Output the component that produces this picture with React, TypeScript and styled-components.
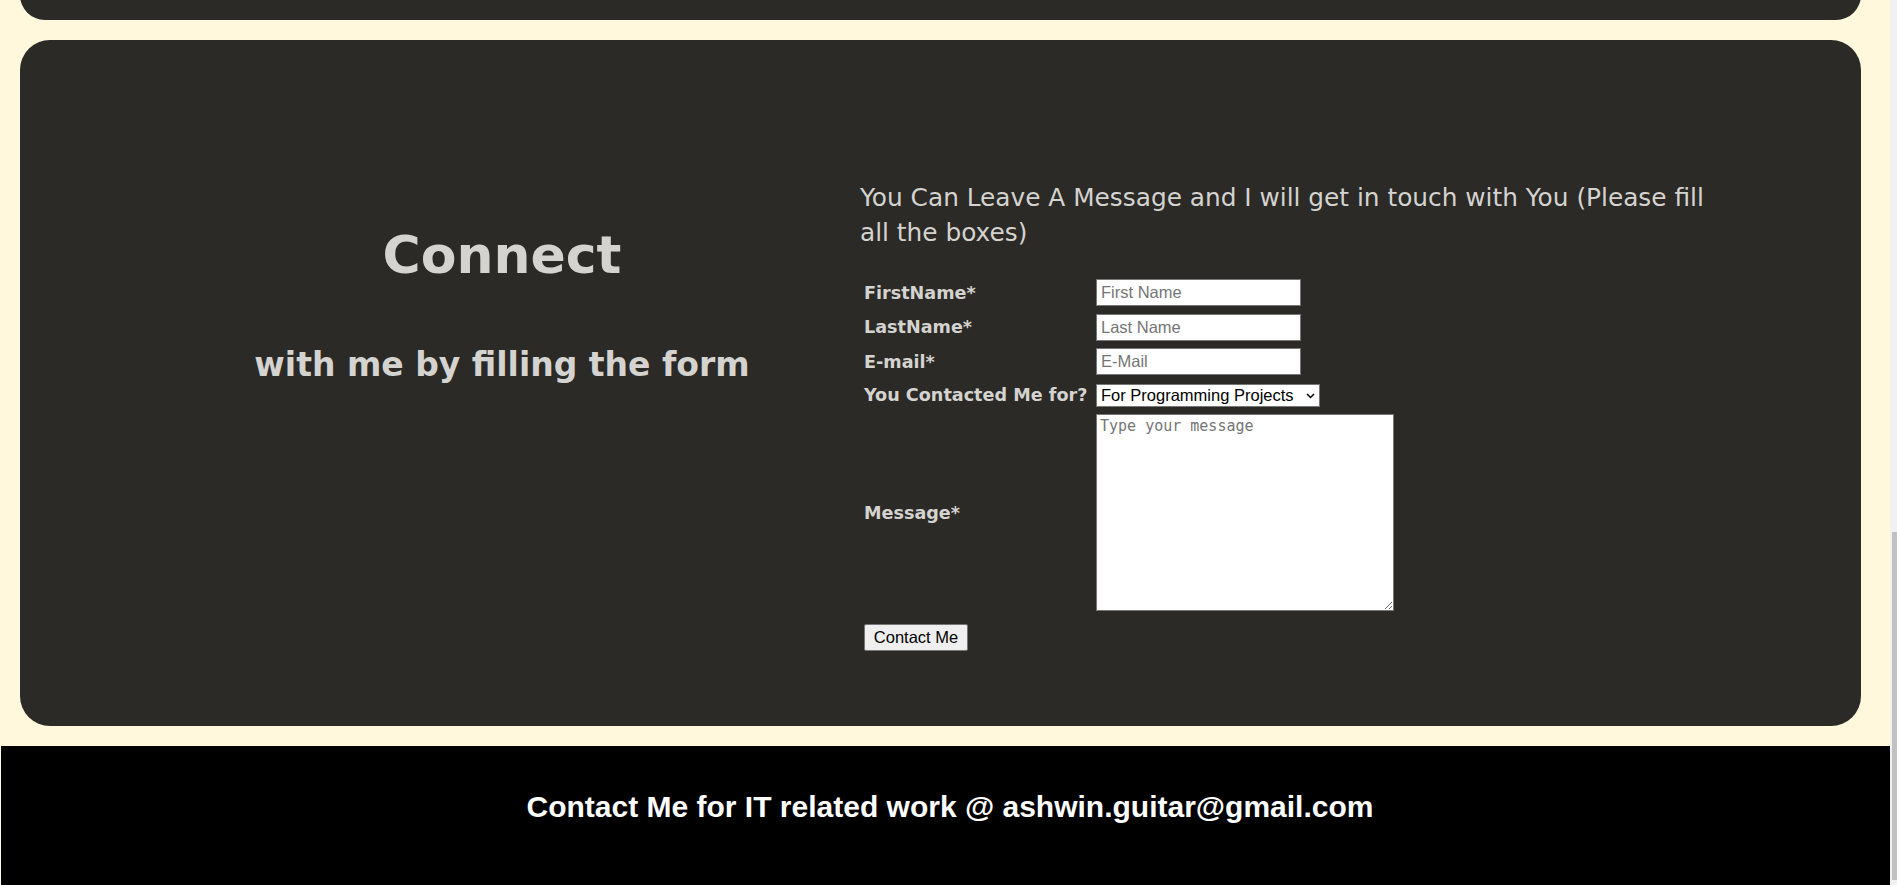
import React from "react";
import styled, { createGlobalStyle } from "styled-components";

const GlobalStyle = createGlobalStyle`
  html, body {
    margin: 0;
    padding: 0;
    overflow: hidden;
    background: #fff8dc;
  }
  * { box-sizing: border-box; }
`;

const CARD_BG = "#2b2a26";
const TEXT_LIGHT = "#d5d3d0";
const HAND = `"DejaVu Sans", "Comic Sans MS", sans-serif`;
const ARIAL = `"Liberation Sans", Arial, sans-serif`;

const Viewport = styled.div`
  display: flex;
  width: 1897px;
  height: 885px;
  overflow: hidden;
`;

const Page = styled.div`
  width: 1890px;
  display: flex;
  flex-direction: column;
  background: #fff8dc;
`;

const Card = styled.section`
  width: 1841px;
  margin-left: 20px;
  background: ${CARD_BG};
  border-radius: 30px;
`;

const PrevCard = styled(Card)`
  height: 50px;
  margin-top: -30px;
  flex-shrink: 0;
`;

const ContactCard = styled(Card)`
  height: 686px;
  margin-top: 20px;
  flex-shrink: 0;
  display: grid;
  grid-template-columns: 716px 880px;
  align-items: start;
  padding-left: 124px;
`;

const Intro = styled.div`
  padding-top: 173px;
  text-align: center;
  color: ${TEXT_LIGHT};
  font-family: ${HAND};
  font-weight: 700;
`;

const Title = styled.h1`
  margin: 0;
  font-size: 52px;
  line-height: 84px;
  font-weight: 700;
`;

const Subtitle = styled.h2`
  margin: 40px 0 0;
  font-size: 33px;
  line-height: 56px;
  font-weight: 700;
`;

const FormColumn = styled.div`
  padding-top: 140px;
  color: ${TEXT_LIGHT};
  font-family: ${HAND};
`;

const Heading = styled.h3`
  margin: 0;
  max-width: 872px;
  font-size: 24.8px;
  line-height: 35px;
  font-weight: 400;
`;

const Form = styled.form`
  margin: 29px 0 0 4px;
  display: grid;
  grid-template-columns: 228px auto;
  grid-template-rows: 27px 27px 27px 24px 197px auto;
  column-gap: 4px;
  row-gap: 7.5px;
  align-items: center;
`;

const Label = styled.label`
  font-size: 17.6px;
  font-weight: 700;
  line-height: 24px;
  white-space: nowrap;
`;

const TextInput = styled.input`
  width: 205px;
  height: 27px;
  padding: 1px 4px;
  border: 1px solid #767676;
  border-radius: 0;
  background: #fff;
  color: #000;
  font-family: ${ARIAL};
  font-size: 16.5px;
  outline: none;
  &::placeholder { color: #757575; }
`;

const SelectWrap = styled.div`
  position: relative;
  width: 224px;
  height: 23px;
  align-self: end;
`;

const Select = styled.select`
  appearance: none;
  width: 224px;
  height: 23px;
  padding: 0 20px 0 4px;
  border: 1px solid #767676;
  border-radius: 0;
  background: #fff;
  color: #000;
  font-family: ${ARIAL};
  font-size: 16.5px;
  outline: none;
`;

const Chevron = styled.svg`
  position: absolute;
  right: 5px;
  top: 9px;
  pointer-events: none;
`;

const TextArea = styled.textarea`
  display: block;
  width: 298px;
  height: 197px;
  padding: 2px 3px;
  border: 1px solid #767676;
  border-radius: 0;
  background: #fff;
  color: #000;
  font-family: "DejaVu Sans Mono", "Liberation Mono", monospace;
  font-size: 15px;
  resize: both;
  outline: none;
  &::placeholder { color: #757575; }
`;

const SubmitButton = styled.button`
  grid-column: 1;
  justify-self: start;
  align-self: start;
  width: 104px;
  height: 27px;
  margin-top: 5px;
  padding: 0 6px;
  border: 1px solid #767676;
  border-radius: 2px;
  background: #efefef;
  color: #000;
  font-family: ${ARIAL};
  font-size: 16.5px;
`;

const Footer = styled.footer`
  flex: 1;
  margin-top: 20px;
  margin-left: 1px;
  background: #000;
  display: flex;
  justify-content: center;
  padding: 43px 0 0 9px;
`;

const FooterText = styled.h2`
  margin: 0;
  color: #fff;
  font-family: ${ARIAL};
  font-size: 30px;
  line-height: 35px;
  font-weight: 700;
`;

const Scrollbar = styled.div`
  width: 7px;
  background: #f1f1f1;
  display: flex;
  flex-direction: column;
  justify-content: flex-end;
  align-items: flex-end;
  padding-bottom: 5px;
`;

const ScrollThumb = styled.div`
  width: 5px;
  height: 348px;
  background: #c1c1c1;
`;

export default function App() {
  return (
    <>
      <GlobalStyle />
      <Viewport>
        <Page>
          <PrevCard />
          <ContactCard>
            <Intro>
              <Title>Connect</Title>
              <Subtitle>with me by filling the form</Subtitle>
            </Intro>
            <FormColumn>
              <Heading>
                You Can Leave A Message and I will get in touch with You (Please fill all the boxes)
              </Heading>
              <Form onSubmit={(e) => e.preventDefault()}>
                <Label htmlFor="fname">FirstName*</Label>
                <TextInput id="fname" placeholder="First Name" />
                <Label htmlFor="lname">LastName*</Label>
                <TextInput id="lname" placeholder="Last Name" />
                <Label htmlFor="email">E-mail*</Label>
                <TextInput id="email" placeholder="E-Mail" />
                <Label htmlFor="reason">You Contacted Me for?</Label>
                <SelectWrap>
                  <Select id="reason" defaultValue="programming">
                    <option value="programming">For Programming Projects</option>
                    <option value="guitar">For Guitar Lessons</option>
                    <option value="other">Other</option>
                  </Select>
                  <Chevron width="9" height="6" viewBox="0 0 9 6">
                    <polyline points="1,1 4.5,4.5 8,1" fill="none" stroke="#000" strokeWidth="1.5" />
                  </Chevron>
                </SelectWrap>
                <Label htmlFor="msg">Message*</Label>
                <TextArea id="msg" placeholder="Type your message" />
                <SubmitButton type="submit">Contact Me</SubmitButton>
              </Form>
            </FormColumn>
          </ContactCard>
          <Footer>
            <FooterText>Contact Me for IT related work @ ashwin.guitar@gmail.com</FooterText>
          </Footer>
        </Page>
        <Scrollbar>
          <ScrollThumb />
        </Scrollbar>
      </Viewport>
    </>
  );
}
